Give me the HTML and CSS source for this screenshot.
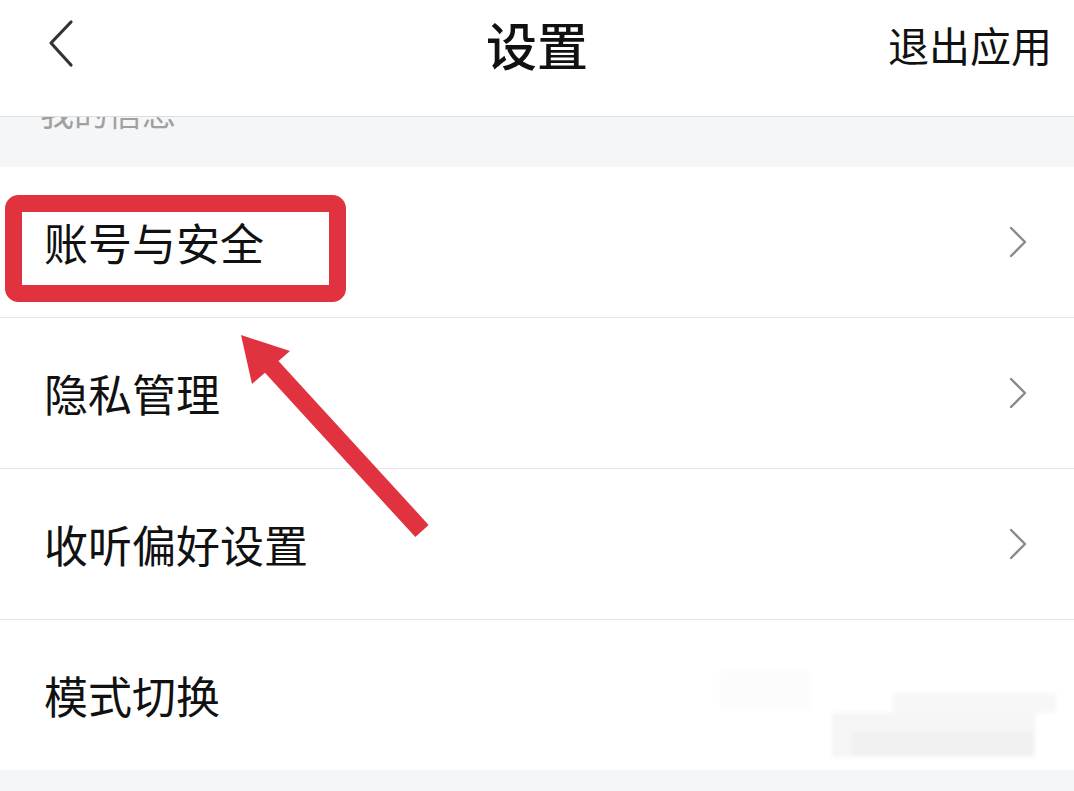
FILE: index.html
```html
<!DOCTYPE html>
<html lang="zh-CN">
<head>
<meta charset="utf-8">
<title>设置</title>
<link rel="stylesheet" href="styles.css">
</head>
<body>
<div class="page">
  <header class="topbar">
    <div class="back">
      <svg width="30" height="50" viewBox="0 0 30 50"><polyline points="24,3 4,24 24,46" fill="none" stroke="#333" stroke-width="3.2" stroke-linecap="round" stroke-linejoin="round"/></svg>
    </div>
    <h1 class="title">设置</h1>
    <div class="exit">退出应用</div>
  </header>
  <div class="section-label"><span>我的信息</span></div>
  <ul class="list">
    <li class="row"><span>账号与安全</span><svg class="chev" width="20" height="32" viewBox="0 0 20 32"><polyline points="3,2 17,16 3,30" fill="none" stroke="#8a8a8a" stroke-width="2.4" stroke-linecap="round" stroke-linejoin="round"/></svg></li>
    <li class="row"><span>隐私管理</span><svg class="chev" width="20" height="32" viewBox="0 0 20 32"><polyline points="3,2 17,16 3,30" fill="none" stroke="#8a8a8a" stroke-width="2.4" stroke-linecap="round" stroke-linejoin="round"/></svg></li>
    <li class="row"><span>收听偏好设置</span><svg class="chev" width="20" height="32" viewBox="0 0 20 32"><polyline points="3,2 17,16 3,30" fill="none" stroke="#8a8a8a" stroke-width="2.4" stroke-linecap="round" stroke-linejoin="round"/></svg></li>
    <li class="row"><span>模式切换</span></li>
  </ul>
  <div class="footer-gap"></div>
  <svg class="annot" width="1074" height="791" viewBox="0 0 1074 791">
    <defs>
      <filter id="soft" x="-10%" y="-10%" width="120%" height="120%"><feGaussianBlur stdDeviation="2"/></filter>
    </defs>
    <g filter="url(#soft)">
      <rect x="893" y="693" width="163" height="20" fill="#f7f7f7"/>
      <rect x="832" y="713" width="203" height="44" fill="#f5f5f5"/>
      <rect x="852" y="733" width="181" height="22" fill="#f0f0f0"/>
      <rect x="720" y="670" width="90" height="40" fill="#fcfcfc"/>
    </g>
    <rect x="13.5" y="203.5" width="324" height="90" rx="5" fill="none" stroke="#e0333f" stroke-width="17"/>
    <line x1="270" y1="365" x2="422" y2="531" stroke="#e0333f" stroke-width="18"/>
    <polygon points="241,335 290,351 252,384" fill="#e0333f"/>
  </svg>
</div>
</body>
</html>
```
FILE: styles.css
```css
html, body {
  margin: 0;
  padding: 0;
  background: #f5f6f8;
}
.page {
  position: relative;
  width: 1074px;
  height: 791px;
  overflow: hidden;
  font-family: "Noto Sans CJK SC", "Noto Sans", sans-serif;
  color: #111;
  background: #f5f6f8;
}
.topbar {
  position: relative;
  z-index: 2;
  display: grid;
  grid-template-columns: 1fr auto 1fr;
  align-items: center;
  height: 88px;
  padding-bottom: 28px;
  background: #fff;
  border-bottom: 1px solid #dedede;
}
.back {
  padding-left: 47px;
  display: flex;
  align-items: center;
}
.back svg { display: block; }
.title {
  margin: 0;
  font-size: 51px;
  font-weight: 500;
  line-height: 1;
}
.exit {
  justify-self: end;
  padding-right: 22px;
  font-size: 41px;
  line-height: 1;
}
.section-label {
  height: 50px;
  overflow: hidden;
  background: #f5f6f8;
}
.section-label span {
  display: block;
  margin-top: -22px;
  padding-left: 40px;
  font-size: 34px;
  line-height: 1;
  color: #a0a0a0;
}
.list {
  list-style: none;
  margin: 0;
  padding: 0;
  background: #fff;
}
.row {
  display: flex;
  align-items: center;
  justify-content: space-between;
  height: 150px;
  padding: 0 46px 0 44px;
  font-size: 44px;
  line-height: 1;
  border-bottom: 1px solid #e6e6e6;
}
.row:last-child { border-bottom: none; }
.chev { display: block; }
.footer-gap {
  height: 20px;
  background: #f5f6f8;
}
.annot {
  position: absolute;
  left: 0;
  top: 0;
  z-index: 3;
  pointer-events: none;
}
```
